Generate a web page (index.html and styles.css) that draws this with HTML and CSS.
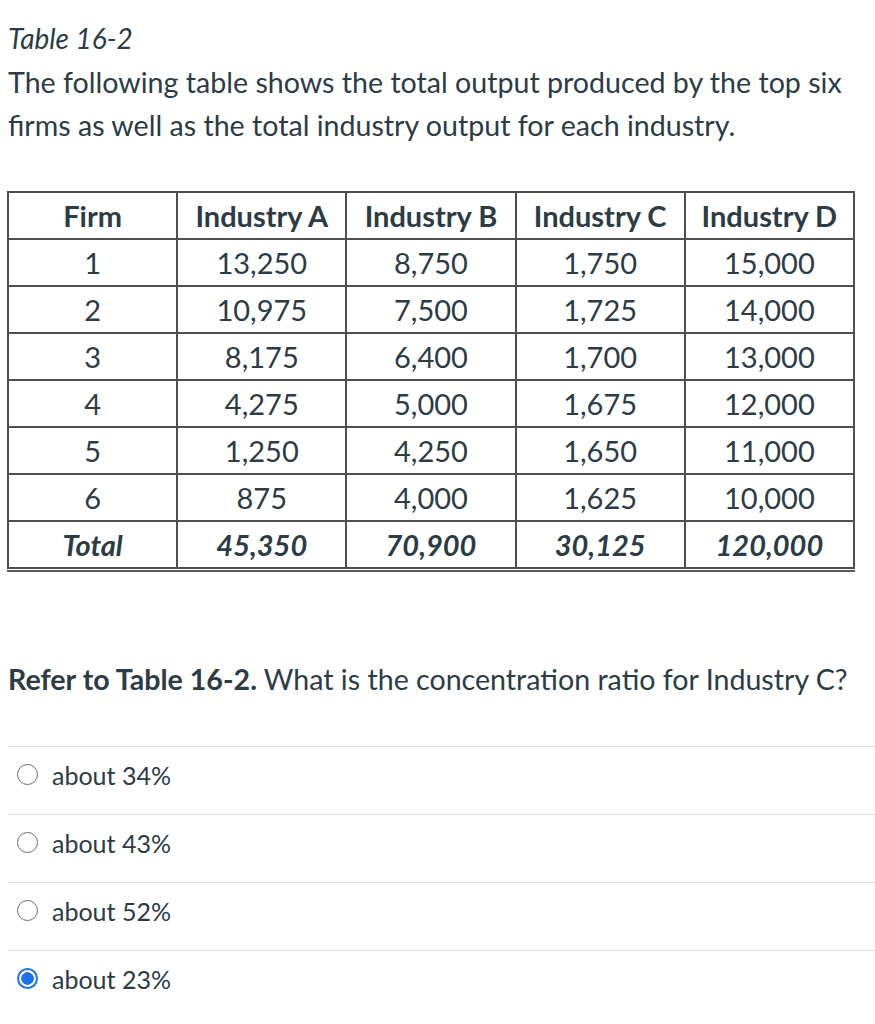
FILE: index.html
```html
<!DOCTYPE html>
<html>
<head>
<meta charset="utf-8">
<link rel="stylesheet" href="styles.css">
</head>
<body>
<div class="page">
  <h1 class="title">Table 16-2</h1>
  <p class="intro">The following table shows the total output produced by the top six firms as well as the total industry output for each industry.</p>
  <div class="table-wrap">
    <table class="data">
      <thead>
        <tr><th>Firm</th><th>Industry A</th><th>Industry B</th><th>Industry C</th><th>Industry D</th></tr>
      </thead>
      <tbody>
        <tr><td>1</td><td>13,250</td><td>8,750</td><td>1,750</td><td>15,000</td></tr>
        <tr><td>2</td><td>10,975</td><td>7,500</td><td>1,725</td><td>14,000</td></tr>
        <tr><td>3</td><td>8,175</td><td>6,400</td><td>1,700</td><td>13,000</td></tr>
        <tr><td>4</td><td>4,275</td><td>5,000</td><td>1,675</td><td>12,000</td></tr>
        <tr><td>5</td><td>1,250</td><td>4,250</td><td>1,650</td><td>11,000</td></tr>
        <tr><td>6</td><td>875</td><td>4,000</td><td>1,625</td><td>10,000</td></tr>
        <tr class="total"><td class="bi">Total</td><td class="bi">45,350</td><td class="bi">70,900</td><td class="bi">30,125</td><td class="bi">120,000</td></tr>
      </tbody>
    </table>
  </div>
  <p class="question"><strong>Refer to Table 16-2.</strong> What is the concentration ratio for Industry C?</p>
  <ul class="answers">
    <li class="answer"><span class="radio"></span><span>about 34%</span></li>
    <li class="answer"><span class="radio"></span><span>about 43%</span></li>
    <li class="answer"><span class="radio"></span><span>about 52%</span></li>
    <li class="answer"><span class="radio checked"></span><span>about 23%</span></li>
  </ul>
</div>
</body>
</html>
```
FILE: styles.css
```css
html, body {
  margin: 0;
  padding: 0;
  background: #fff;
}
body {
  font-family: Lato, "Open Sans", sans-serif;
  color: #2d3b45;
}
.page {
  padding: 0 0 0 8px;
}
.title {
  margin: 0;
  padding-top: 20px;
  font-size: 28px;
  font-weight: 400;
  font-style: italic;
  line-height: 36px;
}
.intro {
  margin: 5px 0 0 0;
  font-size: 28.6px;
  line-height: 43px;
  max-width: 850px;
}
.table-wrap {
  margin-top: 44px;
  margin-left: -1px;
  width: 848px;
  border-bottom: 2px solid #5a5a5a;
  padding-bottom: 1px;
}
.data {
  border-collapse: collapse;
  width: 848px;
  table-layout: fixed;
  border: 2px solid #555;
  border-bottom-color: #9a9a9a;
}
.data th, .data td {
  border: 2px solid #4f4f4f;
  height: 45px;
  padding: 0;
  text-align: center;
  font-size: 29px;
  font-weight: 400;
}
.data th {
  font-weight: 700;
}
.data .bi {
  font-style: italic;
  font-weight: 700;
}
.question {
  margin: 89px 0 0 0;
  font-size: 28.6px;
  line-height: 36px;
}
.question strong {
  font-weight: 700;
}
.answers {
  list-style: none;
  margin: 49px 0 0 0;
  padding: 0;
}
.answer {
  display: flex;
  align-items: center;
  gap: 14px;
  height: 55px;
  padding-bottom: 12px;
  border-top: 1px solid #dcdcdc;
  padding-left: 9px;
  font-size: 25px;
}
.radio {
  width: 21px;
  height: 21px;
  border-radius: 50%;
  border: 1.5px solid #6b6b6b;
  box-sizing: border-box;
  flex: none;
}
.radio.checked {
  border: 2px solid #1a73e8;
  background: radial-gradient(circle, #1a73e8 0 6px, #fff 6.5px);
}
```
